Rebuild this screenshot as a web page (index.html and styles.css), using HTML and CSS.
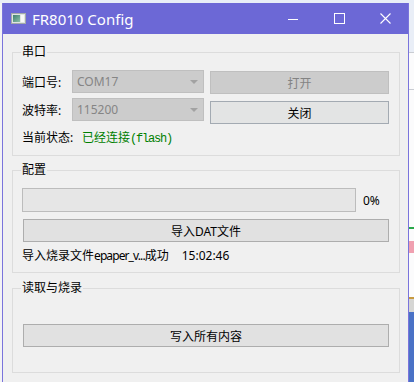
FILE: index.html
```html
<!DOCTYPE html>
<html lang="zh-CN">
<head>
  <meta charset="UTF-8" />
  <title>FR8010 Config</title>
  <link rel="stylesheet" href="styles.css">
</head>
<body>
  <div class="top-strip"></div>
  <div class="screen">
    <div class="edge-left"></div>

    <div class="window">
      <div class="titlebar">
        <svg class="app-icon" width="15" height="11" viewBox="0 0 15 11">
          <defs>
            <linearGradient id="ig" x1="0" y1="0" x2="1" y2="1">
              <stop offset="0" stop-color="#3f7f70"/>
              <stop offset="1" stop-color="#8cc0a8"/>
            </linearGradient>
          </defs>
          <rect x="0.5" y="0.5" width="14" height="10" fill="#dfe4e2" stroke="#a3aaa8"/>
          <rect x="2" y="2" width="7" height="7" fill="url(#ig)"/>
          <rect x="10" y="2" width="3" height="7" fill="#f8f8f8"/>
        </svg>
        <span class="title">FR8010 Config</span>
        <div class="controls">
          <span class="ctl">
            <svg width="10" height="10" viewBox="0 0 10 10"><path d="M0 5.5H10" stroke="#fff" stroke-width="1"/></svg>
          </span>
          <span class="ctl">
            <svg width="11" height="11" viewBox="0 0 11 11"><rect x="0.5" y="0.5" width="10" height="10" fill="none" stroke="#fff"/></svg>
          </span>
          <span class="ctl">
            <svg width="11" height="11" viewBox="0 0 11 11"><path d="M0.5 0.5L10.5 10.5M10.5 0.5L0.5 10.5" stroke="#fff" stroke-width="1.1"/></svg>
          </span>
        </div>
      </div>

      <div class="client">
        <div class="group g-serial">
          <span class="group-title">串口</span>
          <div class="serial-top">
            <div class="fields">
              <div class="field">
                <label>端口号:</label>
                <div class="combo"><span>COM17</span><i class="arrow"></i></div>
              </div>
              <div class="field">
                <label>波特率:</label>
                <div class="combo"><span>115200</span><i class="arrow"></i></div>
              </div>
            </div>
            <div class="actions">
              <button class="btn disabled">打开</button>
              <button class="btn focus">关闭</button>
            </div>
          </div>
          <div class="status">
            <span class="status-label">当前状态:</span>
            <span class="status-value">已经连接<span class="mono">(flash)</span></span>
          </div>
        </div>

        <div class="group g-config">
          <span class="group-title">配置</span>
          <div class="progress-row">
            <div class="progress"></div>
            <span class="pct">0%</span>
          </div>
          <button class="btn btn-wide">导入DAT文件</button>
          <div class="log">导入烧录文件<span class="fname">epaper_v...</span>成功<span class="time">15:02:46</span></div>
        </div>

        <div class="group g-burn">
          <span class="group-title">读取与烧录</span>
          <button class="btn btn-wide">写入所有内容</button>
        </div>
      </div>
    </div>

    <div class="edge-right">
      <div class="er-sky"></div>
      <div class="er-line"></div>
      <div class="er-white er-a"></div>
      <div class="er-line"></div>
      <div class="er-white er-b"></div>
      <div class="er-green"></div>
      <div class="er-white er-c"></div>
      <div class="er-red"></div>
      <div class="er-white er-d"></div>
      <div class="er-gold"></div>
      <div class="er-grey"></div>
      <div class="er-blue"></div>
    </div>
  </div>
</body>
</html>
```

FILE: styles.css
```css
* {
  box-sizing: border-box;
}

body {
  margin: 0;
  width: 414px;
  height: 382px;
  overflow: hidden;
  background-color: #f8f9fb;
  font-family: "Noto Sans", "Noto Sans CJK SC", sans-serif;
  font-size: 12px;
  color: #000;
}

.top-strip {
  height: 3px;
  background-color: #e8eef7;
}

.screen {
  display: flex;
  height: 379px;
}

.edge-left {
  width: 2px;
  background-color: #f3f3f5;
}

/* window frame */
.window {
  width: 407px;
  display: flex;
  flex-direction: column;
  border-left: 1px solid #7a74dc;
  border-right: 1px solid #7a74dc;
  background-color: #f0f0f0;
}

.titlebar {
  height: 31px;
  display: flex;
  align-items: center;
  padding-left: 8px;
  background-color: #6c68d6;
  color: #fff;
}

.app-icon {
  display: block;
}

.title {
  margin-left: 6px;
  font-size: 15px;
  line-height: 20px;
}

.controls {
  margin-left: auto;
  display: flex;
  height: 100%;
}

.ctl {
  width: 46px;
  display: flex;
  align-items: center;
  justify-content: center;
}

.ctl svg {
  display: block;
}

.client {
  flex: 1;
  padding: 18px 8px 0 9px;
}

/* group boxes */
.group {
  position: relative;
  border: 1px solid #dcdcdc;
  padding: 17px 10px 0 9px;
}

.group-title {
  position: absolute;
  top: -9px;
  left: 8px;
  padding: 0 1px;
  line-height: 16px;
  background-color: #f0f0f0;
}

.g-serial {
  height: 104px;
}

.g-config {
  margin-top: 14px;
  height: 103px;
}

.g-burn {
  margin-top: 15px;
  height: 85px;
  padding-top: 35px;
}

.serial-top {
  display: flex;
  gap: 6px;
}

.fields {
  display: flex;
  flex-direction: column;
  gap: 5px;
}

.field {
  display: flex;
  align-items: center;
  height: 23px;
}

.field label {
  width: 50px;
}

.combo {
  width: 132px;
  height: 23px;
  display: flex;
  align-items: center;
  justify-content: space-between;
  padding: 0 5px 0 4px;
  border: 1px solid #bfbfbf;
  background-color: #cccccc;
  color: #858585;
}

.arrow {
  width: 0;
  height: 0;
  border-left: 4px solid transparent;
  border-right: 4px solid transparent;
  border-top: 4px solid #a2a2a2;
}

.actions {
  width: 179px;
  display: flex;
  flex-direction: column;
  gap: 7px;
  padding-top: 1px;
}

.btn {
  height: 23px;
  margin: 0;
  padding: 0;
  display: flex;
  align-items: center;
  justify-content: center;
  border: 1px solid #adadad;
  background-color: #e1e1e1;
  font: inherit;
  color: #000;
}

.btn.disabled {
  border-color: #bfbfbf;
  background-color: #cccccc;
  color: #838383;
}

.btn.focus {
  border-color: #a3aab2;
  background-color: #e3e4e4;
}

.status {
  display: flex;
  margin-top: 6px;
  line-height: 16px;
}

.status-label {
  width: 60px;
}

.status-value {
  color: #008000;
}

.mono {
  font-family: "Liberation Mono", monospace;
  letter-spacing: -1.2px;
}

.progress-row {
  display: flex;
  align-items: center;
}

.progress {
  width: 334px;
  height: 24px;
  border: 1px solid #bcbcbc;
  background-color: #e6e6e6;
}

.pct {
  margin-left: 7px;
}

.btn-wide {
  width: 366px;
  margin: 7px 0 0 1px;
}

.g-burn .btn-wide {
  margin-top: 0;
}

.log {
  margin-top: 6px;
  line-height: 16px;
}

.fname {
  letter-spacing: -0.9px;
}

.time {
  margin-left: 13px;
}

/* desktop peeking out on the right */
.edge-right {
  flex: 1;
  display: flex;
  flex-direction: column;
  background-color: #fbfbfc;
}

.er-sky { height: 49px; background-color: #e9eef7; }
.er-line { height: 1px; background-color: #c9ccd2; }
.er-a { height: 36px; }
.er-b { height: 137px; }
.er-green { height: 2px; background-color: #2aa84a; }
.er-c { height: 12px; }
.er-red { height: 12px; background-color: #f0a0b0; }
.er-d { height: 44px; }
.er-gold { height: 2px; background-color: #c89a40; }
.er-grey { height: 13px; background-color: #d6d6d4; }
.er-blue { flex: 1; background-color: #4a72c6; }
```
